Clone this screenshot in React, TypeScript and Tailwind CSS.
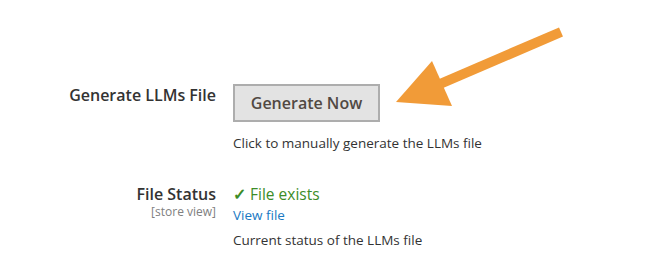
export default function App() {
  return (
    <div
      className="relative w-[650px] h-[280px] bg-white text-[#333333]"
      style={{ fontFamily: '"Open Sans", "Noto Sans", sans-serif' }}
    >
      <div className="flex flex-col pt-[84px]">
        {/* Generate row */}
        <div className="flex gap-[17px]">
          <div className="w-[216px] text-right pt-[1px] text-[16px] font-semibold leading-[20px]">
            Generate LLMs File
          </div>
          <div className="flex flex-col">
            <button className="w-[147px] h-[38px] border-2 border-[#adadad] bg-[#e3e3e3] text-[16px] font-semibold text-[#514943] leading-none">
              Generate Now
            </button>
            <p className="mt-[12px] text-[13.5px] leading-[18px]">
              Click to manually generate the LLMs file
            </p>
          </div>
        </div>

        {/* Status row */}
        <div className="flex gap-[17px] mt-[32px]">
          <div className="w-[216px] text-right flex flex-col">
            <span className="text-[16px] font-semibold leading-[21px]">File Status</span>
            <span className="text-[12px] text-[#808080] leading-[13px]">[store view]</span>
          </div>
          <div className="flex flex-col">
            <span className="text-[15.5px] text-[#3c8c28] leading-[21px]">
              <span className="font-semibold">✓</span> File exists
            </span>
            <a href="#" className="text-[13.5px] text-[#1979c3] leading-[20px]">
              View file
            </a>
            <p className="mt-[6px] text-[13.5px] leading-[18px]">Current status of the LLMs file</p>
          </div>
        </div>
      </div>

      {/* annotation arrow */}
      <svg className="absolute left-0 top-0" width="650" height="280" viewBox="0 0 650 280">
        <line x1="561" y1="32" x2="440" y2="84" stroke="#f19b38" strokeWidth="10" />
        <polygon points="396,102 432,61 452,106" fill="#f19b38" />
      </svg>
    </div>
  );
}
